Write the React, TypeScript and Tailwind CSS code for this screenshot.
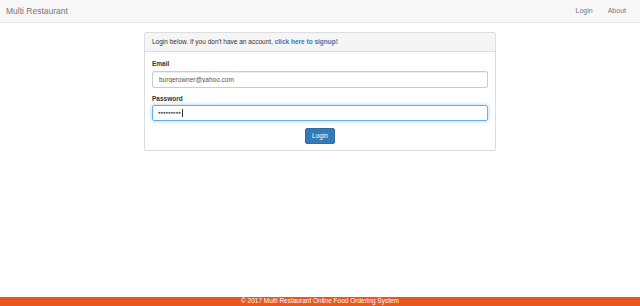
import React from 'react';

const NavBar: React.FC = () => (
  <nav className="h-[23px] bg-[#f8f8f8] border-b border-[#e7e7e7] flex items-center justify-between pl-[6px]">
    <span className="text-[8.5px] text-[#777]">Multi Restaurant</span>
    <div className="flex items-center gap-[15px] pr-[14px] text-[7px]">
      <a href="#" className="text-[#777]">Login</a>
      <a href="#" className="text-[#777]">About</a>
    </div>
  </nav>
);

const LoginPanel: React.FC = () => (
  <div className="w-[352px] mx-auto mt-[9px] border border-[#ddd] rounded-[2px] bg-white">
    <div className="h-[19px] flex items-center px-[7px] bg-[#f5f5f5] border-b border-[#ddd] text-[6.5px] text-[#333]">
      <span>
        Login below. If you don't have an account,{' '}
        <a href="#" className="font-bold text-[#337ab7]">click here to signup!</a>
      </span>
    </div>
    <div className="px-[7px] pt-[9px] pb-[6px] flex flex-col">
      <label className="text-[6.5px] font-bold text-[#333] leading-none mb-[3px]">Email</label>
      <input
        type="text"
        readOnly
        defaultValue="burgerowner@yahoo.com"
        className="h-[17px] w-full border border-[#ccc] rounded-[2px] px-[6px] text-[6.5px] text-[#555] outline-none shadow-[inset_0_1px_1px_rgba(0,0,0,0.075)]"
      />
      <label className="text-[6.5px] font-bold text-[#333] leading-none mt-[8px] mb-[3px]">Password</label>
      <div className="h-[16px] w-full border border-[#66afe9] rounded-[2px] px-[5px] flex items-center shadow-[0_0_4px_rgba(102,175,233,0.6)]">
        <span className="text-[4.5px] tracking-[-0.2px] text-[#555] leading-none">●●●●●●●●●</span>
        <span className="w-px h-[8px] bg-[#333] ml-[1px]" />
      </div>
      <div className="flex justify-center mt-[7px]">
        <button className="h-[16px] px-[6px] bg-[#337ab7] border border-[#2e6da4] rounded-[2px] text-white text-[6.5px]">
          Login
        </button>
      </div>
    </div>
  </div>
);

export default function App() {
  return (
    <div className="min-h-screen flex flex-col bg-white font-['Liberation_Sans',Arial,sans-serif]">
      <NavBar />
      <LoginPanel />
      <footer className="mt-auto h-[9px] bg-[#e9561f] flex items-center justify-center text-white text-[6.5px] leading-none">
        © 2017 Multi Restaurant Online Food Ordering System
      </footer>
    </div>
  );
}
